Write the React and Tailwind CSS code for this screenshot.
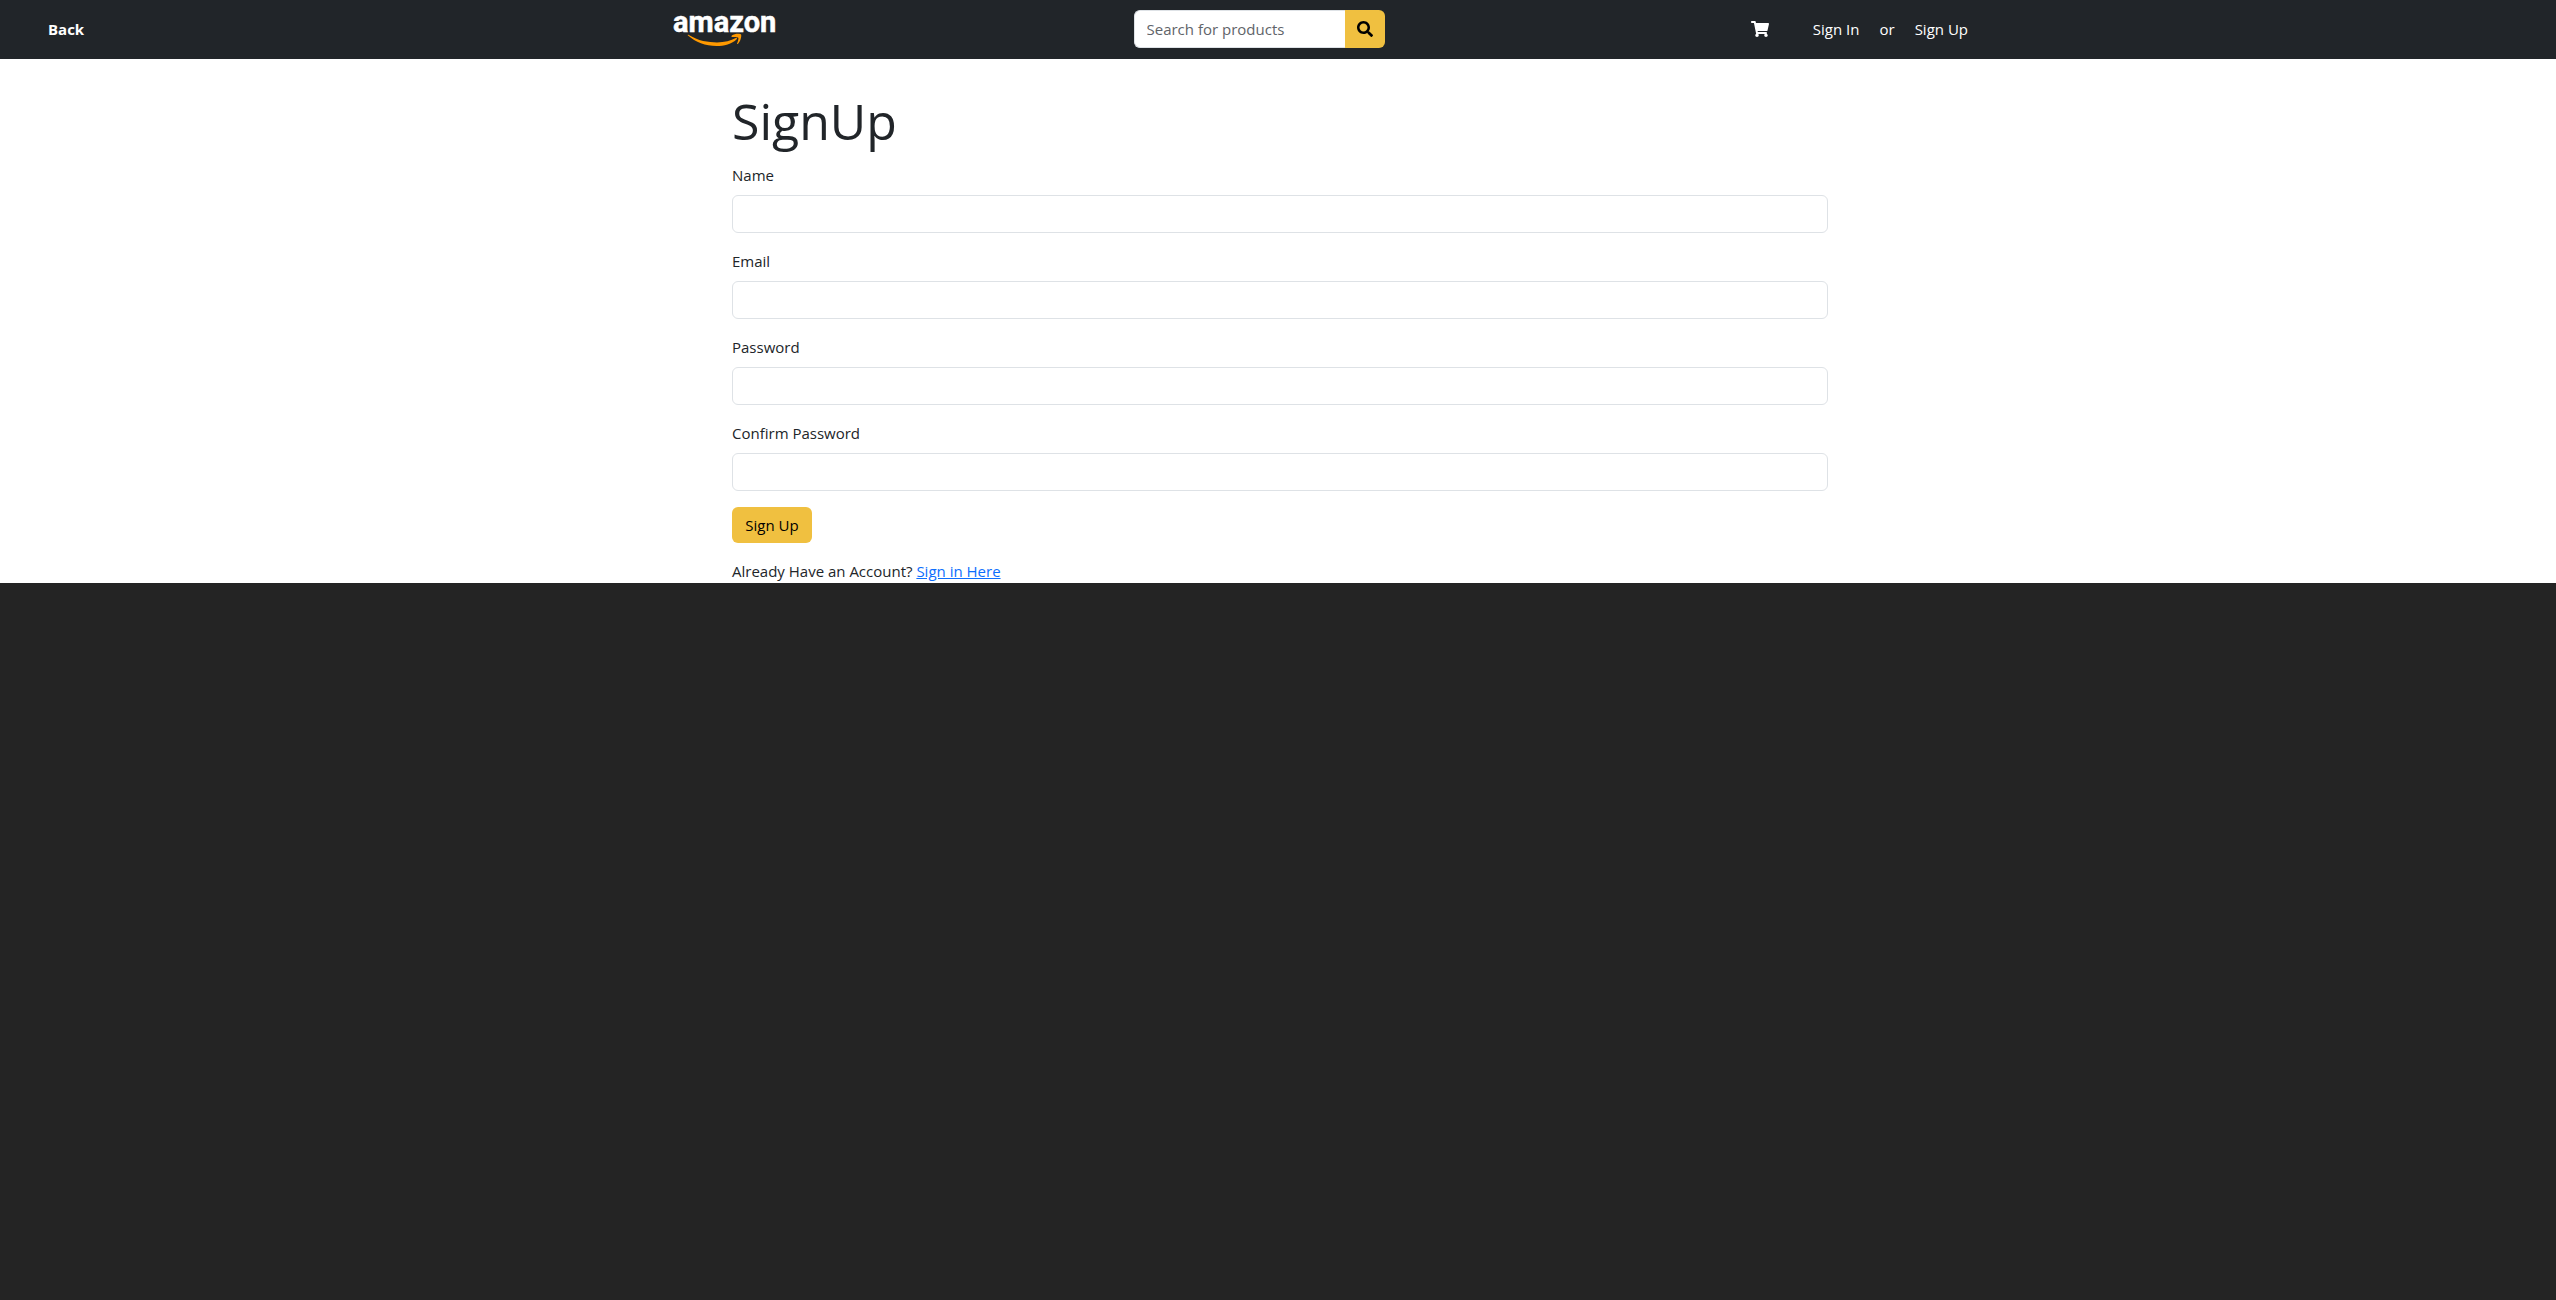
import { FaSearch, FaShoppingCart } from 'react-icons/fa';

function Logo() {
  return (
    <svg role="img" aria-label="amazon" width="100" height="38" viewBox="0 0 100 38" className="block overflow-visible">
      <text x="-1" y="22" fill="#fff" stroke="#fff" strokeWidth="0.5" fontSize="29" fontWeight="700" fontFamily="Roboto, 'Liberation Sans', sans-serif">amazon</text>
      <path fill="#ff9900" d="M14.500 24.800C24 31 34.500 32.400 43 32.400c7.500 0 14-1.800 18.800-4.400.9-.5 1.700.4.9 1.200C58 34 50 36 42.500 36 31.500 36 21.500 32.300 14 25.600c-.6-.5-.2-1.200.5-.8z" />
      <path fill="#ff9900" d="M57.800 25.400c3-2.200 8.800-2 9.300-.9.600 1.300-.4 6.900-3.200 9.400-.5.4-1 .2-.8-.4.7-1.700 1.700-5.100 1.200-5.800-.7-.9-4-.8-6-.6-.7.1-1.100-.8-.5-1.700z" />
    </svg>
  );
}

function Field({ id, label, type = 'text' }) {
  return (
    <div className="mb-4">
      <label htmlFor={id} className="mb-2 block">{label}</label>
      <input id={id} type={type} className="block h-[38px] w-full rounded-md border border-[#dee2e6] bg-white px-3" />
    </div>
  );
}

export default function App() {
  return (
    <div className="min-h-screen bg-[#242424] font-['Open_Sans',sans-serif] text-[15px] leading-6 text-[#212529]">
      <header className="flex items-center bg-[#212529] pb-[11px] pl-12 pt-[10px] text-white">
        <a href="#back" className="w-10 font-bold">Back</a>
        <nav className="mx-auto flex w-full max-w-[1296px] items-center justify-between">
          <a href="#home"><Logo /></a>
          <form role="search" className="flex h-[38px]" onSubmit={(e) => e.preventDefault()}>
            <input
              type="text"
              aria-label="Search for products"
              placeholder="Search for products"
              className="w-[211px] rounded-l-md border border-r-0 border-[#dee2e6] bg-white px-3 text-[#212529] placeholder:text-[#5f6469]"
            />
            <button type="submit" aria-label="Search" className="flex w-10 items-center justify-center rounded-r-md bg-[#f0c040] text-black">
              <FaSearch size={16} />
            </button>
          </form>
          <div className="flex w-[226px] items-center justify-end gap-5 pr-0.5">
            <a href="#cart" aria-label="Cart" className="mr-6"><FaShoppingCart size={18} /></a>
            <a href="#signin">Sign In</a>
            <span>or</span>
            <a href="#signup">Sign Up</a>
          </div>
        </nav>
      </header>
      <main className="bg-white pl-1 pt-8">
        <div className="mx-auto max-w-[1096px]">
          <h1 className="mb-[11px] text-[50px] leading-[61px]">SignUp</h1>
          <form onSubmit={(e) => e.preventDefault()}>
            <Field id="name" label="Name" />
            <Field id="email" label="Email" type="email" />
            <Field id="password" label="Password" type="password" />
            <Field id="confirm" label="Confirm Password" type="password" />
            <button type="submit" className="mb-4 block h-9 w-20 rounded-md bg-[#f0c040] text-black">Sign Up</button>
            <p>
              Already Have an Account? <a href="#signin" className="text-[#0d6efd] underline">Sign in Here</a>
            </p>
          </form>
        </div>
      </main>
    </div>
  );
}
